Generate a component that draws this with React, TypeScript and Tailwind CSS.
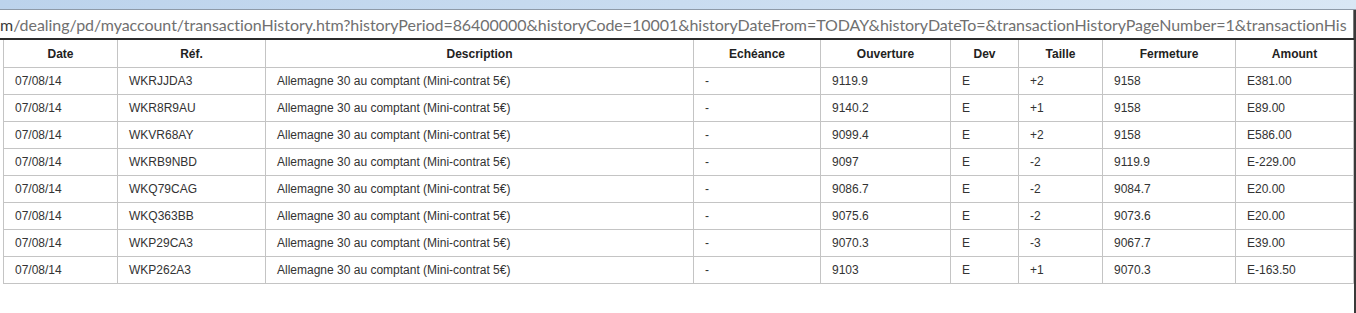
import React from 'react';

type Row = {
  date: string;
  ref: string;
  desc: string;
  ech: string;
  ouv: string;
  dev: string;
  taille: string;
  ferm: string;
  amount: string;
};

const rows: Row[] = [
  { date: '07/08/14', ref: 'WKRJJDA3', desc: 'Allemagne 30 au comptant (Mini-contrat 5€)', ech: '-', ouv: '9119.9', dev: 'E', taille: '+2', ferm: '9158', amount: 'E381.00' },
  { date: '07/08/14', ref: 'WKR8R9AU', desc: 'Allemagne 30 au comptant (Mini-contrat 5€)', ech: '-', ouv: '9140.2', dev: 'E', taille: '+1', ferm: '9158', amount: 'E89.00' },
  { date: '07/08/14', ref: 'WKVR68AY', desc: 'Allemagne 30 au comptant (Mini-contrat 5€)', ech: '-', ouv: '9099.4', dev: 'E', taille: '+2', ferm: '9158', amount: 'E586.00' },
  { date: '07/08/14', ref: 'WKRB9NBD', desc: 'Allemagne 30 au comptant (Mini-contrat 5€)', ech: '-', ouv: '9097', dev: 'E', taille: '-2', ferm: '9119.9', amount: 'E-229.00' },
  { date: '07/08/14', ref: 'WKQ79CAG', desc: 'Allemagne 30 au comptant (Mini-contrat 5€)', ech: '-', ouv: '9086.7', dev: 'E', taille: '-2', ferm: '9084.7', amount: 'E20.00' },
  { date: '07/08/14', ref: 'WKQ363BB', desc: 'Allemagne 30 au comptant (Mini-contrat 5€)', ech: '-', ouv: '9075.6', dev: 'E', taille: '-2', ferm: '9073.6', amount: 'E20.00' },
  { date: '07/08/14', ref: 'WKP29CA3', desc: 'Allemagne 30 au comptant (Mini-contrat 5€)', ech: '-', ouv: '9070.3', dev: 'E', taille: '-3', ferm: '9067.7', amount: 'E39.00' },
  { date: '07/08/14', ref: 'WKP262A3', desc: 'Allemagne 30 au comptant (Mini-contrat 5€)', ech: '-', ouv: '9103', dev: 'E', taille: '+1', ferm: '9070.3', amount: 'E-163.50' },
];

// largeurs de colonnes mesurées sur la capture
const cols = [114, 148, 428, 127, 130, 68, 84, 133, 118];
const heads = ['Date', 'Réf.', 'Description', 'Echéance', 'Ouverture', 'Dev', 'Taille', 'Fermeture', 'Amount'];

export default function App() {
  return (
    <div className="w-[1356px] h-[313px] bg-white overflow-hidden relative" style={{ fontFamily: '"Liberation Sans", Arial, sans-serif' }}>
      {/* Chrome navigateur */}
      <div className="h-[9px] bg-gradient-to-r from-[#bcd3ec] via-[#c9dcf0] to-[#d9e7f5]" />
      <div className="h-px bg-[#8e9aa8]" />

      {/* Barre d'adresse */}
      <div className="h-[28px] bg-white border-r border-[#7a7a7a] mr-[2px] flex items-center overflow-hidden whitespace-nowrap">
        <span className="text-[16px] leading-none text-[#707070] tracking-[-0.05px] pt-[2px]" style={{ fontFamily: 'Lato, "Open Sans", sans-serif' }}>
          <span className="text-[#3a3a3a]">m</span>/dealing/pd/myaccount/transactionHistory.htm?historyPeriod=86400000&amp;historyCode=10001&amp;historyDateFrom=TODAY&amp;historyDateTo=&amp;transactionHistoryPageNumber=1&amp;transactionHis
        </span>
      </div>
      <div className="h-[2px] bg-[#2b2b2b]" />

      {/* Tableau */}
      <div className="flex">
        <div className="w-[3px] shrink-0" />
        <table className="border-collapse text-[12px] text-[#333] table-fixed">
          <colgroup>
            {cols.map((w, i) => (
              <col key={i} style={{ width: w }} />
            ))}
          </colgroup>
          <thead>
            <tr className="h-[27px]">
              {heads.map((h) => (
                <th key={h} className="border border-[#c4c4c4] border-t-0 font-bold text-center px-2 text-[#222] pt-px">
                  {h}
                </th>
              ))}
            </tr>
          </thead>
          <tbody>
            {rows.map((r) => (
              <tr key={r.ref} className="h-[27px]">
                {[r.date, r.ref, r.desc, r.ech, r.ouv, r.dev, r.taille, r.ferm, r.amount].map((v, i) => (
                  <td key={i} className="border border-[#c4c4c4] pl-[11px] whitespace-nowrap">
                    {v}
                  </td>
                ))}
              </tr>
            ))}
          </tbody>
        </table>
      </div>

      {/* bord droit de la fenêtre */}
      <div className="absolute right-0 top-[10px] bottom-0 w-[2px] bg-[#3a3a3a]" />
    </div>
  );
}
